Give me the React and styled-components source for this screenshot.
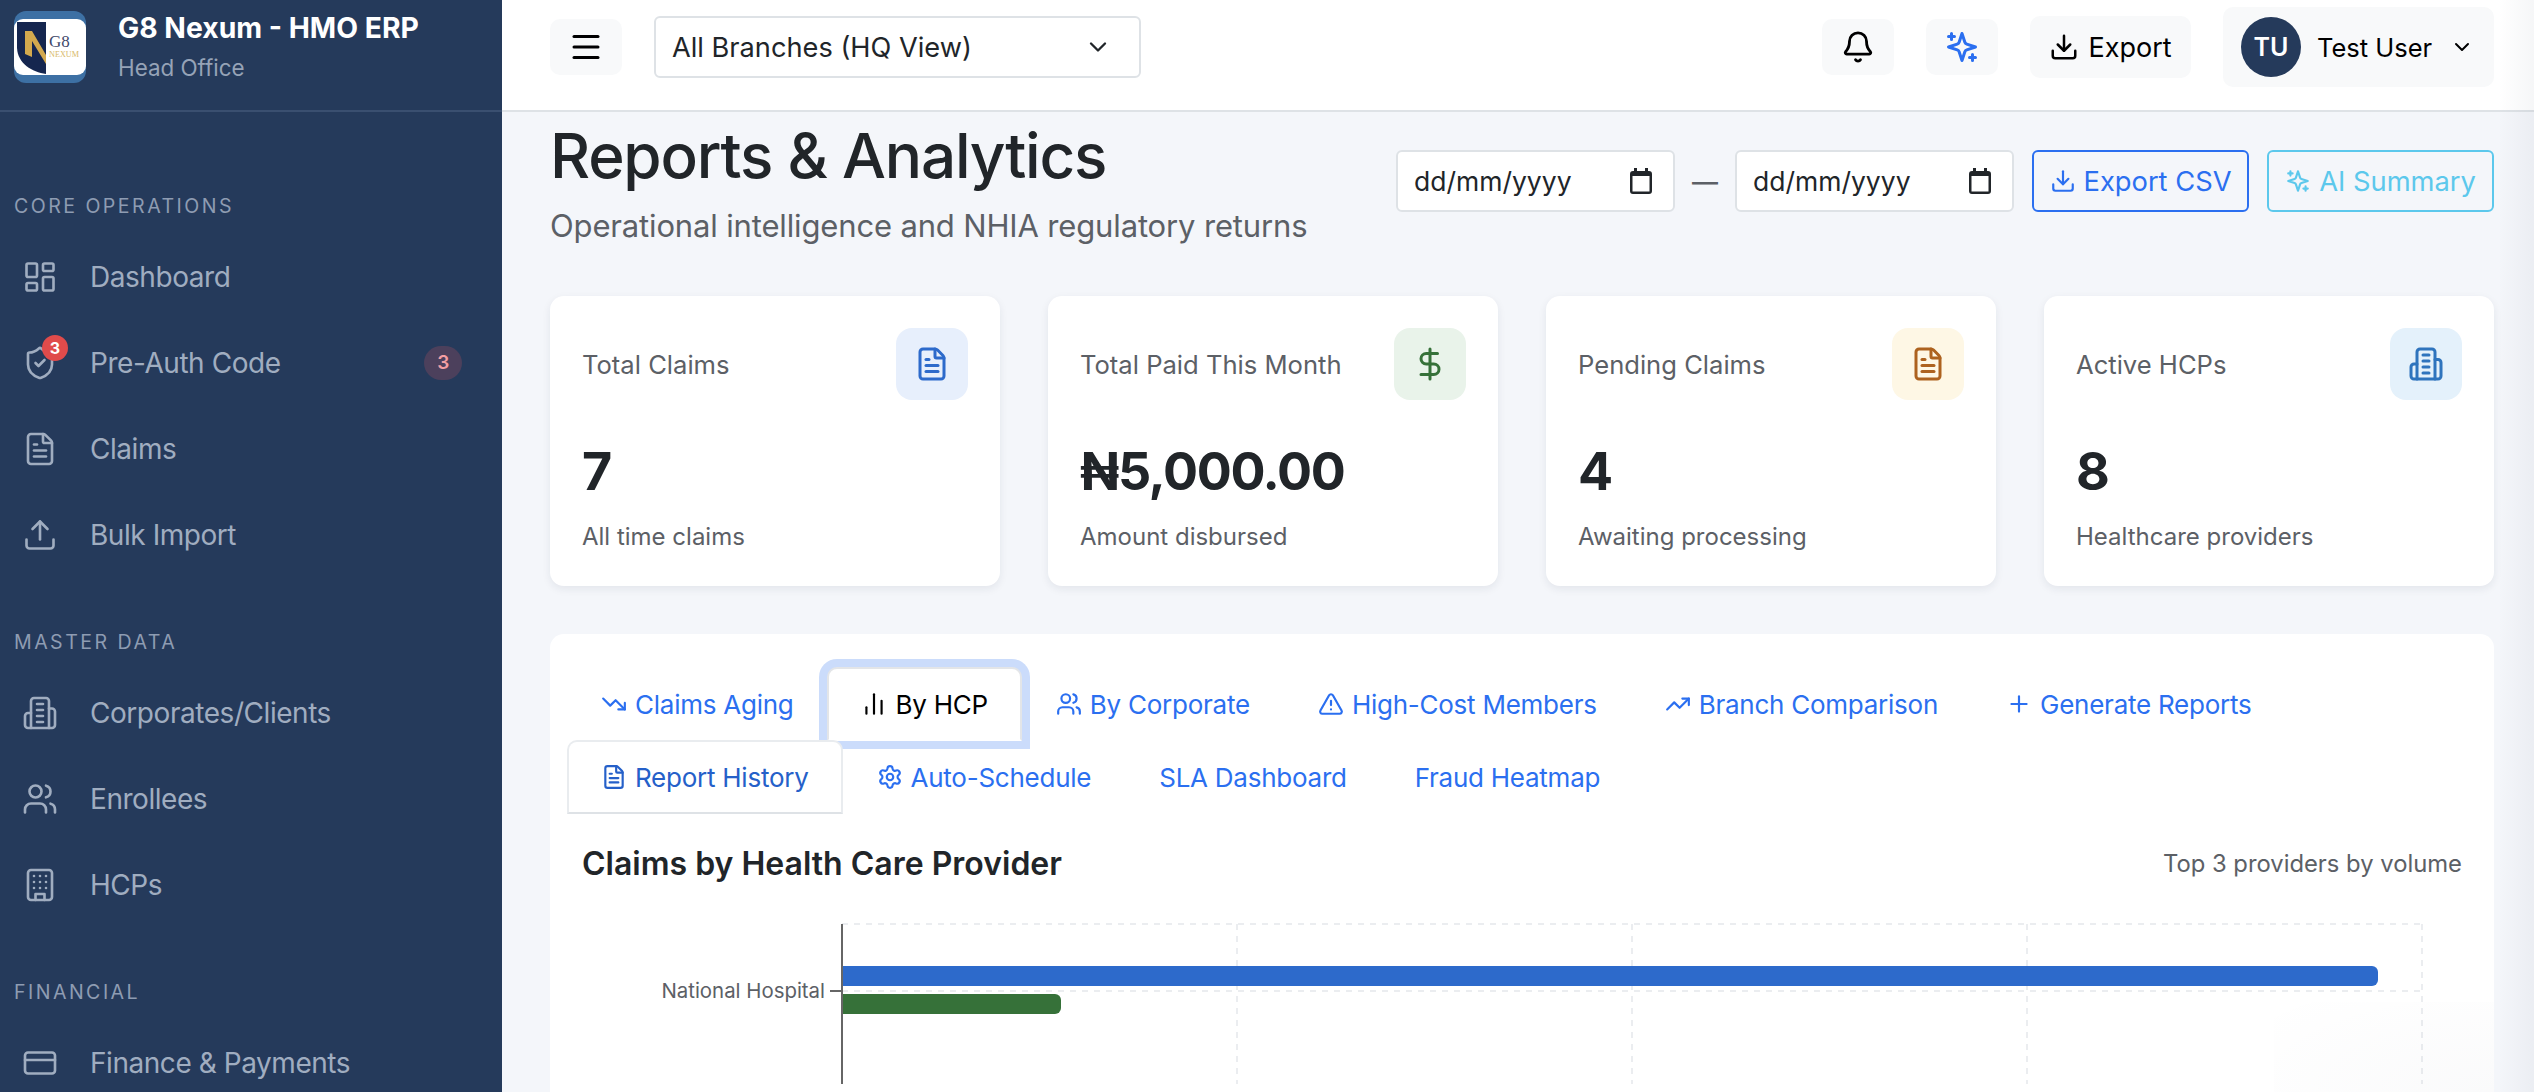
import styled, { createGlobalStyle } from 'styled-components';
import {
  LayoutDashboard,
  ShieldCheck,
  FileText,
  Upload,
  Users,
  CreditCard,
  Menu,
  ChevronDown,
  Bell,
  Download,
  DollarSign,
  TrendingDown,
  TrendingUp,
  BarChart2,
  AlertTriangle,
  Plus,
  Settings,
} from 'lucide-react';

const GlobalStyle = createGlobalStyle`
  html, body {
    margin: 0;
    padding: 0;
    height: 100%;
    overflow: hidden;
  }
  body {
    font-family: Inter, "Liberation Sans", sans-serif;
    color: #212529;
    background: #f4f6fa;
  }
  * {
    box-sizing: border-box;
  }
`;

// lucide's current set redrew these, so keep the older strokes here
const Sparkle = ({ size = 24, strokeWidth = 2 }) => (
  <svg width={size} height={size} viewBox="0 0 24 24" fill="none" stroke="currentColor" strokeWidth={strokeWidth} strokeLinecap="round" strokeLinejoin="round">
    <path d="m12 3-1.912 5.813a2 2 0 0 1-1.275 1.275L3 12l5.813 1.912a2 2 0 0 1 1.275 1.275L12 21l1.912-5.813a2 2 0 0 1 1.275-1.275L21 12l-5.813-1.912a2 2 0 0 1-1.275-1.275L12 3Z" />
    <path d="M5 3v4M19 17v4M3 5h4M17 19h4" />
  </svg>
);

const Tower = ({ size = 24, strokeWidth = 2 }) => (
  <svg width={size} height={size} viewBox="0 0 24 24" fill="none" stroke="currentColor" strokeWidth={strokeWidth} strokeLinecap="round" strokeLinejoin="round">
    <path d="M6 22V4a2 2 0 0 1 2-2h8a2 2 0 0 1 2 2v18Z" />
    <path d="M6 12H4a2 2 0 0 0-2 2v6a2 2 0 0 0 2 2h2" />
    <path d="M18 9h2a2 2 0 0 1 2 2v9a2 2 0 0 1-2 2h-2" />
    <path d="M10 6h4M10 10h4M10 14h4M10 18h4" />
  </svg>
);

const Block = ({ size = 24, strokeWidth = 2 }) => (
  <svg width={size} height={size} viewBox="0 0 24 24" fill="none" stroke="currentColor" strokeWidth={strokeWidth} strokeLinecap="round" strokeLinejoin="round">
    <rect x="4" y="2" width="16" height="20" rx="2" />
    <path d="M9 22v-4h6v4" />
    <path d="M8 6h.01M16 6h.01M12 6h.01M12 10h.01M12 14h.01M16 10h.01M16 14h.01M8 10h.01M8 14h.01" />
  </svg>
);

const Calendar = () => (
  <svg width="22" height="26" viewBox="0 0 22 26">
    <path fill="currentColor" d="M4 0h3v3h8V0h3v3h1a3 3 0 0 1 3 3v17a3 3 0 0 1-3 3H3a3 3 0 0 1-3-3V6a3 3 0 0 1 3-3h1Z" />
    <rect x="2.5" y="8" width="17" height="15.5" fill="#fff" />
  </svg>
);

const Logo = () => (
  <svg width="72" height="72" viewBox="0 0 72 72">
    <rect width="72" height="72" rx="12" fill="#3d70a4" />
    <rect y="8" width="72" height="56" rx="9" fill="#fff" />
    <path d="M3 11h29v52c-14-2-28-10-29-26Z" fill="#15264f" />
    <path d="M11 20h7l14 24v9L18 30v16l-7-3Z" fill="#d3a94e" />
    <text x="35" y="36" fontFamily="'Liberation Serif', serif" fontSize="17" fill="#3f4a6b">G8</text>
    <text x="35" y="46" fontFamily="'Liberation Serif', serif" fontSize="8.2" fill="#d8b968">NEXUM</text>
  </svg>
);

const Shell = styled.div`
  position: relative;
  display: flex;
  width: 100%;
  height: 100vh;
  overflow: hidden;

  &::after {
    content: '';
    position: absolute;
    top: 0;
    right: 0;
    bottom: 0;
    width: 36px;
    background: linear-gradient(to right, rgba(40, 50, 80, 0), rgba(40, 50, 80, 0.045));
    pointer-events: none;
  }
`;

const Sidebar = styled.aside`
  flex: 0 0 502px;
  background: #253a5b;
  overflow: hidden;
`;

const Brand = styled.div`
  display: flex;
  align-items: center;
  gap: 32px;
  height: 112px;
  padding: 0 14px 16px;
  border-bottom: 2px solid #3a4f70;
`;

const BrandText = styled.div`
  display: flex;
  flex-direction: column;
  gap: 12px;
`;

const BrandName = styled.div`
  font-size: 28.3px;
  line-height: 30px;
  font-weight: 700;
  color: #fff;
`;

const BrandSub = styled.div`
  font-size: 22.4px;
  line-height: 26px;
  color: #96a3b7;
`;

const Nav = styled.nav`
  display: flex;
  flex-direction: column;
  gap: 48px;
  padding-top: 78px;
`;

const NavSection = styled.div`
  display: flex;
  flex-direction: column;
`;

const SectionLabel = styled.div`
  height: 30px;
  margin-bottom: 14px;
  padding: 1px 0 0 14px;
  font-size: 19.6px;
  line-height: 30px;
  letter-spacing: 2.45px;
  color: #8e9cb2;
`;

const NavItem = styled.div`
  display: flex;
  align-items: center;
  height: 86px;
  padding: 0 40px 0 22px;
  font-size: 28px;
  letter-spacing: -0.45px;
  color: #a0adc0;
`;

const NavIcon = styled.span`
  position: relative;
  display: flex;
  justify-content: center;
  width: 36px;
  margin-right: 32px;
`;

const IconBadge = styled.span`
  position: absolute;
  top: -10px;
  right: -10px;
  width: 26px;
  height: 26px;
  border-radius: 50%;
  background: #e04b4b;
  color: #fff;
  font-size: 16px;
  font-weight: 700;
  letter-spacing: 0;
  line-height: 26px;
  text-align: center;
`;

const NavPill = styled.span`
  margin-left: auto;
  width: 38px;
  height: 34px;
  border-radius: 17px;
  background: #4c405c;
  color: #f29ea3;
  font-size: 19px;
  font-weight: 600;
  line-height: 34px;
  text-align: center;
`;

const Main = styled.main`
  flex: 1;
  min-width: 0;
  display: flex;
  flex-direction: column;
`;

const Topbar = styled.header`
  display: flex;
  align-items: center;
  justify-content: space-between;
  flex: 0 0 112px;
  padding: 0 40px 16px 48px;
  background: #fff;
  border-bottom: 2px solid #dee2e6;
`;

const TopGroup = styled.div`
  display: flex;
  align-items: center;
  gap: ${(p) => p.$gap}px;
`;

const SquareButton = styled.button`
  display: flex;
  align-items: center;
  justify-content: center;
  width: 72px;
  height: 56px;
  padding: 0;
  border: 0;
  border-radius: 10px;
  background: #f8f9fa;
  color: ${(p) => p.$color || '#000'};
`;

const BranchSelect = styled.div`
  display: flex;
  align-items: center;
  justify-content: space-between;
  width: 487px;
  height: 62px;
  padding: 0 27px 0 16px;
  border: 2px solid #dee2e6;
  border-radius: 6px;
  background: #fff;
  font-size: 27.2px;
  color: #212529;
`;

const ExportButton = styled.button`
  display: flex;
  align-items: center;
  justify-content: center;
  gap: 9px;
  width: 161px;
  height: 62px;
  padding: 0;
  border: 0;
  border-radius: 10px;
  background: #f8f9fa;
  color: #000;
  font-family: inherit;
  font-size: 27px;
`;

const UserMenu = styled.div`
  display: flex;
  align-items: center;
  width: 271px;
  height: 80px;
  padding: 0 20px 0 18px;
  border-radius: 10px;
  background: #f8f9fa;
  font-size: 25.5px;
  color: #000;
`;

const Avatar = styled.span`
  flex: 0 0 60px;
  height: 60px;
  margin-right: 16px;
  border-radius: 50%;
  background: #253a5b;
  color: #fff;
  font-size: 25px;
  font-weight: 600;
  line-height: 60px;
  text-align: center;
`;

const UserChevron = styled.span`
  display: flex;
  margin-left: auto;
`;

const Content = styled.div`
  flex: 1;
  min-height: 0;
  display: flex;
  flex-direction: column;
  padding: 4px 40px 0 48px;
`;

const PageHead = styled.div`
  display: flex;
  align-items: center;
  justify-content: space-between;
  height: 130px;
`;

const PageTitle = styled.h1`
  margin: 0 0 11px;
  font-size: 62px;
  line-height: 78px;
  font-weight: 500;
  letter-spacing: -1.2px;
  color: #212529;
`;

const PageSub = styled.p`
  margin: 0;
  font-size: 31px;
  line-height: 40px;
  letter-spacing: -0.15px;
  color: #5c6066;
`;

const HeadActions = styled.div`
  display: flex;
  align-items: center;
`;

const DateField = styled.div`
  display: flex;
  align-items: center;
  justify-content: space-between;
  width: 279px;
  height: 62px;
  padding: 0 21px 0 16px;
  border: 2px solid #dee2e6;
  border-radius: 6px;
  background: #fff;
  font-size: 26.5px;
  color: #212529;
`;

const DateDash = styled.span`
  width: 60px;
  font-size: 26px;
  font-weight: 500;
  color: #5c6066;
  text-align: center;
`;

const OutlineButton = styled.button`
  display: flex;
  align-items: center;
  justify-content: center;
  gap: 8px;
  width: ${(p) => p.$width}px;
  height: 62px;
  margin-left: ${(p) => p.$left}px;
  padding: 0;
  border: 2px solid ${(p) => p.$color};
  border-radius: 6px;
  background: transparent;
  color: ${(p) => p.$color};
  font-family: inherit;
  font-size: 27.3px;
`;

const StatGrid = styled.div`
  display: grid;
  grid-template-columns: repeat(4, 1fr);
  gap: 48px;
  margin-top: 50px;
`;

const StatCard = styled.div`
  height: 290px;
  padding: 32px;
  border-radius: 14px;
  background: #fff;
  box-shadow: 0 3px 8px rgba(30, 40, 70, 0.08);
`;

const StatTop = styled.div`
  display: flex;
  align-items: center;
  justify-content: space-between;
  margin-bottom: 42px;
`;

const StatLabel = styled.div`
  font-size: 25.6px;
  color: #5c6066;
`;

const StatIcon = styled.div`
  display: flex;
  align-items: center;
  justify-content: center;
  width: 72px;
  height: 72px;
  border-radius: 16px;
  background: ${(p) => p.$bg};
  color: ${(p) => p.$color};
`;

const StatValue = styled.div`
  font-size: 52px;
  line-height: 60px;
  font-weight: 700;
  letter-spacing: -1.4px;
  color: #212529;
`;

const StatNote = styled.div`
  margin-top: 20px;
  font-size: 24px;
  line-height: 30px;
  color: #5c6066;
`;

const Panel = styled.section`
  flex: 1;
  min-height: 0;
  margin-top: 48px;
  padding: 33px 32px 0 17px;
  border-radius: 14px 14px 0 0;
  background: #fff;
  overflow: hidden;
  position: relative;

  &::after {
    content: '';
    position: absolute;
    right: 0;
    bottom: 0;
    width: 220px;
    height: 90px;
    background: radial-gradient(ellipse at bottom right, rgba(40, 50, 80, 0.025), rgba(40, 50, 80, 0));
    pointer-events: none;
  }
`;

const TabRow = styled.div`
  display: flex;
  height: 73px;
`;

const Tab = styled.div`
  position: relative;
  display: flex;
  align-items: center;
  gap: 8px;
  height: 74px;
  padding: 0 32px;
  border: 2px solid transparent;
  font-size: 26px;
  letter-spacing: -0.25px;
  color: #2b6ff0;
`;

const FocusedTab = styled(Tab)`
  border-color: #e3e5e8 #e3e5e8 #fff;
  border-radius: 10px 10px 0 0;
  background: #fff;
  color: #000;
  box-shadow: 0 0 0 8px #cbdcfb;
`;

const CurrentTab = styled(Tab)`
  z-index: 1;
  border-color: #e9ecef #e9ecef #dee2e6;
  border-radius: 10px 10px 0 0;
  background: #fff;
  color: #2560c9;
`;

const ChartHead = styled.div`
  display: flex;
  align-items: center;
  justify-content: space-between;
  margin: 25px 0 0 15px;
  height: 50px;
`;

const ChartTitle = styled.h2`
  margin: 0;
  font-size: 32px;
  font-weight: 600;
  color: #212529;
`;

const ChartNote = styled.span`
  font-size: 23.8px;
  color: #5c6066;
`;

const Chart = styled.svg`
  display: block;
  margin: 26px 0 0 15px;
  overflow: visible;
`;

const stats = [
  { label: 'Total Claims', value: '7', note: 'All time claims', bg: '#e7effc', color: '#2d6acb', icon: <FileText size={36} /> },
  { label: 'Total Paid This Month', value: '₦5,000.00', note: 'Amount disbursed', bg: '#e9f3ea', color: '#367139', icon: <DollarSign size={36} /> },
  { label: 'Pending Claims', value: '4', note: 'Awaiting processing', bg: '#fef7e5', color: '#ad621f', icon: <FileText size={36} /> },
  { label: 'Active HCPs', value: '8', note: 'Healthcare providers', bg: '#e4f1fb', color: '#2f74bd', icon: <Tower size={36} /> },
];

const gridX = [655, 1050, 1445, 1840];

const App = () => (
  <Shell>
    <GlobalStyle />
    <Sidebar>
      <Brand>
        <Logo />
        <BrandText>
          <BrandName>G8 Nexum - HMO ERP</BrandName>
          <BrandSub>Head Office</BrandSub>
        </BrandText>
      </Brand>
      <Nav>
        <NavSection>
          <SectionLabel>CORE OPERATIONS</SectionLabel>
          <NavItem>
            <NavIcon><LayoutDashboard size={36} strokeWidth={1.75} /></NavIcon>
            Dashboard
          </NavItem>
          <NavItem>
            <NavIcon>
              <ShieldCheck size={36} strokeWidth={1.75} />
              <IconBadge>3</IconBadge>
            </NavIcon>
            Pre-Auth Code
            <NavPill>3</NavPill>
          </NavItem>
          <NavItem>
            <NavIcon><FileText size={36} strokeWidth={1.75} /></NavIcon>
            Claims
          </NavItem>
          <NavItem>
            <NavIcon><Upload size={36} strokeWidth={1.75} /></NavIcon>
            Bulk Import
          </NavItem>
        </NavSection>
        <NavSection>
          <SectionLabel>MASTER DATA</SectionLabel>
          <NavItem>
            <NavIcon><Tower size={36} strokeWidth={1.75} /></NavIcon>
            Corporates/Clients
          </NavItem>
          <NavItem>
            <NavIcon><Users size={36} strokeWidth={1.75} /></NavIcon>
            Enrollees
          </NavItem>
          <NavItem>
            <NavIcon><Block size={36} strokeWidth={1.75} /></NavIcon>
            HCPs
          </NavItem>
        </NavSection>
        <NavSection>
          <SectionLabel>FINANCIAL</SectionLabel>
          <NavItem>
            <NavIcon><CreditCard size={36} strokeWidth={1.75} /></NavIcon>
            Finance &amp; Payments
          </NavItem>
        </NavSection>
      </Nav>
    </Sidebar>

    <Main>
      <Topbar>
        <TopGroup $gap={32}>
          <SquareButton><Menu size={36} /></SquareButton>
          <BranchSelect>
            All Branches (HQ View)
            <ChevronDown size={28} />
          </BranchSelect>
        </TopGroup>
        <TopGroup $gap={32}>
          <SquareButton><Bell size={34} /></SquareButton>
          <SquareButton $color="#2b6ff0"><Sparkle size={36} /></SquareButton>
          <ExportButton><Download size={30} />Export</ExportButton>
          <UserMenu>
            <Avatar>TU</Avatar>
            Test User
            <UserChevron><ChevronDown size={24} /></UserChevron>
          </UserMenu>
        </TopGroup>
      </Topbar>

      <Content>
        <PageHead>
          <div>
            <PageTitle>Reports &amp; Analytics</PageTitle>
            <PageSub>Operational intelligence and NHIA regulatory returns</PageSub>
          </div>
          <HeadActions>
            <DateField>dd/mm/yyyy<Calendar /></DateField>
            <DateDash>—</DateDash>
            <DateField>dd/mm/yyyy<Calendar /></DateField>
            <OutlineButton $width={217} $left={18} $color="#2b6ff0"><Download size={26} />Export CSV</OutlineButton>
            <OutlineButton $width={227} $left={18} $color="#5cc8ec"><Sparkle size={26} />AI Summary</OutlineButton>
          </HeadActions>
        </PageHead>

        <StatGrid>
          {stats.map((stat) => (
            <StatCard key={stat.label}>
              <StatTop>
                <StatLabel>{stat.label}</StatLabel>
                <StatIcon $bg={stat.bg} $color={stat.color}>{stat.icon}</StatIcon>
              </StatTop>
              <StatValue>{stat.value}</StatValue>
              <StatNote>{stat.note}</StatNote>
            </StatCard>
          ))}
        </StatGrid>

        <Panel>
          <TabRow>
            <Tab><TrendingDown size={26} />Claims Aging</Tab>
            <FocusedTab><BarChart2 size={26} />By HCP</FocusedTab>
            <Tab><Users size={26} />By Corporate</Tab>
            <Tab><AlertTriangle size={26} />High-Cost Members</Tab>
            <Tab><TrendingUp size={26} />Branch Comparison</Tab>
            <Tab><Plus size={26} />Generate Reports</Tab>
          </TabRow>
          <TabRow>
            <CurrentTab><FileText size={26} />Report History</CurrentTab>
            <Tab><Settings size={26} />Auto-Schedule</Tab>
            <Tab>SLA Dashboard</Tab>
            <Tab>Fraud Heatmap</Tab>
          </TabRow>

          <ChartHead>
            <ChartTitle>Claims by Health Care Provider</ChartTitle>
            <ChartNote>Top 3 providers by volume</ChartNote>
          </ChartHead>

          <Chart width="1880" height="170" viewBox="0 0 1880 170">
            <g stroke="#ebedf0" strokeWidth="2" strokeDasharray="6 6" fill="none">
              {gridX.map((x) => (
                <line key={x} x1={x} y1="10" x2={x} y2="170" />
              ))}
              <line x1="260" y1="10" x2="1840" y2="10" />
              <line x1="260" y1="77" x2="1840" y2="77" />
            </g>
            <path d="M260 52h1530a6 6 0 0 1 6 6v8a6 6 0 0 1-6 6H260Z" fill="#2d6acb" />
            <path d="M260 80h213a6 6 0 0 1 6 6v8a6 6 0 0 1-6 6H260Z" fill="#367139" />
            <line x1="260" y1="10" x2="260" y2="170" stroke="#666" strokeWidth="2" />
            <line x1="248" y1="77" x2="260" y2="77" stroke="#666" strokeWidth="2" />
            <text x="243" y="84" textAnchor="end" fontFamily="Inter, sans-serif" fontSize="20.4" fill="#5c6066">National Hospital</text>
          </Chart>
        </Panel>
      </Content>
    </Main>
  </Shell>
);

export default App;
